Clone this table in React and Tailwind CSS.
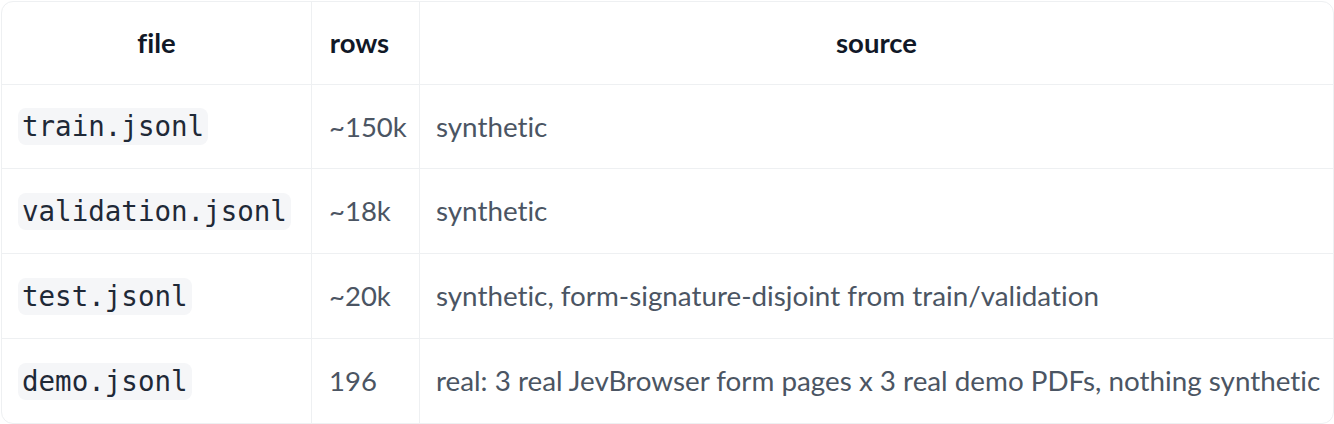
import React from "react";

const rows = [
  { file: "train.jsonl", rows: "~150k", source: "synthetic", h: "h-[84px]" },
  { file: "validation.jsonl", rows: "~18k", source: "synthetic", h: "h-[85px]" },
  { file: "test.jsonl", rows: "~20k", source: "synthetic, form-signature-disjoint from train/validation", h: "h-[85px]" },
  { file: "demo.jsonl", rows: "196", source: "real: 3 real JevBrowser form pages x 3 real demo PDFs, nothing synthetic", h: "h-[84px]", last: true },
];

const sans = { fontFamily: "Lato, 'Noto Sans', sans-serif", fontVariantLigatures: "none" };

export default function App() {
  return (
    <div className="bg-white w-[1334px] h-[424px] pl-px pt-px" style={sans}>
      <div className="w-[1333px] h-[423px] border border-[#eef0f2] rounded-xl overflow-hidden bg-white">
        <div className="grid grid-cols-[310px_108px_913px] h-[83px] border-b border-[#eef0f2]">
          <div className="flex items-center justify-center border-r border-[#eef0f2] text-[27.5px] font-bold text-[#111827]">file</div>
          <div className="flex items-center justify-center pr-[12px] border-r border-[#eef0f2] text-[27.5px] font-bold text-[#111827]">rows</div>
          <div className="flex items-center justify-center text-[27.5px] font-bold text-[#111827]">source</div>
        </div>
        {rows.map((r) => (
          <div key={r.file} className={`grid grid-cols-[310px_108px_913px] ${r.h} ${r.last ? "" : "border-b border-[#eef0f2]"}`}>
            <div className="flex items-center pl-[16px] border-r border-[#eef0f2]">
              <code
                className="bg-[#f5f6f8] rounded-lg px-[4px] py-[1px] text-[27.5px] leading-[35px] text-[#1f2937]"
                style={{ fontFamily: "'DejaVu Sans Mono', 'Liberation Mono', monospace" }}
              >
                {r.file}
              </code>
            </div>
            <div className="flex items-center pl-[17px] border-r border-[#eef0f2] text-[27.5px] text-[#4b5563]">{r.rows}</div>
            <div className="flex items-center pl-[16px] text-[27.8px] text-[#4b5563] whitespace-nowrap">{r.source}</div>
          </div>
        ))}
      </div>
    </div>
  );
}
